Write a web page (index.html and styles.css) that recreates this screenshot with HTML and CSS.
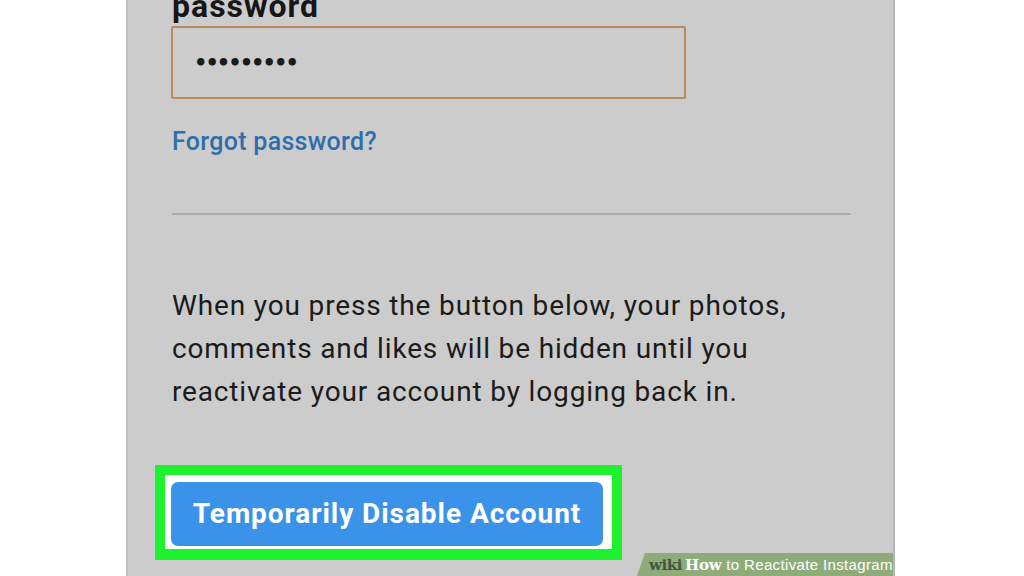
FILE: index.html
```html
<!DOCTYPE html>
<html>
<head>
<meta charset="utf-8">
<link rel="stylesheet" href="styles.css">
</head>
<body>
<div class="page">
  <div class="screen">
    <div class="label">password</div>
    <div class="input"><span class="dots">•••••••••</span></div>
    <a class="forgot">Forgot password?</a>
    <div class="divider"></div>
    <p class="info">When you press the button below, your photos, comments and likes will be hidden until you reactivate your account by logging back in.</p>
    <div class="highlight">
      <div class="highlight-inner">
        <div class="btn">Temporarily Disable Account</div>
      </div>
    </div>
    <div class="wikibadge"><span class="wiki">wiki</span><span class="how">How</span><span class="title">to Reactivate Instagram</span></div>
  </div>
</div>
</body>
</html>
```
FILE: styles.css
```css
* { box-sizing: border-box; }
html, body { margin: 0; padding: 0; background: #ffffff; }
body { width: 1024px; height: 576px; overflow: hidden; font-family: Roboto, "Noto Sans", sans-serif; }
.page { display: flex; height: 576px; }
.screen {
  position: relative;
  margin-left: 126px;
  width: 769px;
  height: 576px;
  background: #cccccc;
  border-left: 2px solid #bdbdbd;
  border-right: 2px solid #b5b5b5;
  padding-left: 44px;
  display: flex;
  flex-direction: column;
  align-items: flex-start;
}
.label {
  font-weight: 700;
  font-size: 32px;
  line-height: 32px;
  color: #161616;
  margin-top: -10px;
  letter-spacing: 1px;
}
.input {
  margin-top: 4px;
  margin-left: -1px;
  width: 515px;
  height: 73px;
  border: 2px solid #b98a5d;
  border-radius: 2px;
  display: flex;
  align-items: center;
  padding-left: 21px;
}
.dots { font-size: 21px; color: #1a1a1a; letter-spacing: -2px; font-family: "DejaVu Sans", sans-serif; font-weight: 700; }
.forgot {
  margin-top: 29px;
  font-size: 25px;
  font-weight: 500;
  color: #2d6fae;
  line-height: 28px;
  letter-spacing: 0.3px;
}
.divider {
  margin-top: 57px;
  width: 679px;
  height: 2px;
  background: #ababab;
}
.info {
  margin: 69px 0 0 0;
  width: 640px;
  font-size: 28px;
  line-height: 43px;
  color: #1b1b1b;
  letter-spacing: 0.85px;
}
.highlight {
  margin-top: 52px;
  margin-left: -17px;
  width: 467px;
  height: 95px;
  border: 10px solid #1ef22f;
  border-bottom-width: 11px;
}
.highlight-inner {
  background: #ffffff;
  height: 100%;
  padding: 7px 9px 2px 6px;
}
.btn {
  height: 64px;
  background: #3b93e9;
  border-radius: 7px;
  color: #ffffff;
  font-weight: 700;
  font-size: 28px;
  display: flex;
  align-items: center;
  justify-content: center;
  letter-spacing: 0.95px;
  padding-bottom: 2px;
}
.wikibadge {
  position: absolute;
  right: 0;
  bottom: 0;
  width: 256px;
  height: 23px;
  background: #8dac79;
  clip-path: polygon(8px 0, 100% 0, 100% 100%, 0 100%);
  display: flex;
  align-items: center;
  padding-left: 12px;
  font-size: 15px;
  white-space: nowrap;
}
.wiki { font-family: "DejaVu Serif", serif; font-weight: 700; color: #48543f; letter-spacing: -0.4px; }
.how { font-family: "DejaVu Serif", serif; font-weight: 700; color: #ffffff; margin-left: 3px; letter-spacing: -0.3px; }
.title { font-family: "Liberation Sans", Arial, sans-serif; color: #ffffff; font-size: 15px; margin-left: 5px; letter-spacing: 0.35px; }
```
